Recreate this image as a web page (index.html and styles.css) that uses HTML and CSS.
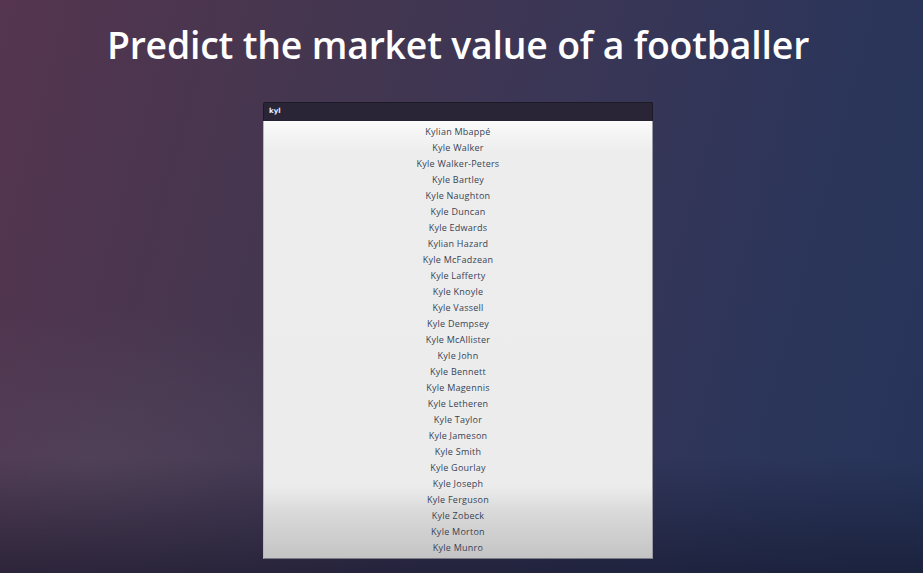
FILE: index.html
```html
<!DOCTYPE html>
<html>
<head>
<meta charset="utf-8">
<link rel="stylesheet" href="styles.css">
</head>
<body>
<div class="page">
  <h1 class="title">Predict the market value of a footballer</h1>
  <div class="search">
    <div class="input">kyl</div>
    <ul class="list">
      <li>Kylian Mbappé</li>
      <li>Kyle Walker</li>
      <li>Kyle Walker-Peters</li>
      <li>Kyle Bartley</li>
      <li>Kyle Naughton</li>
      <li>Kyle Duncan</li>
      <li>Kyle Edwards</li>
      <li>Kylian Hazard</li>
      <li>Kyle McFadzean</li>
      <li>Kyle Lafferty</li>
      <li>Kyle Knoyle</li>
      <li>Kyle Vassell</li>
      <li>Kyle Dempsey</li>
      <li>Kyle McAllister</li>
      <li>Kyle John</li>
      <li>Kyle Bennett</li>
      <li>Kyle Magennis</li>
      <li>Kyle Letheren</li>
      <li>Kyle Taylor</li>
      <li>Kyle Jameson</li>
      <li>Kyle Smith</li>
      <li>Kyle Gourlay</li>
      <li>Kyle Joseph</li>
      <li>Kyle Ferguson</li>
      <li>Kyle Zobeck</li>
      <li>Kyle Morton</li>
      <li>Kyle Munro</li>
    </ul>
  </div>
</div>
</body>
</html>
```
FILE: styles.css
```css
html, body {
  margin: 0;
  height: 100%;
}
body {
  background:
    linear-gradient(to bottom, rgba(0,0,0,0) 0%, rgba(0,0,0,0) 80%, rgba(18,20,40,0.55) 100%),
    radial-gradient(ellipse 320px 160px at 100px 470px, rgba(90,85,105,0.35), rgba(90,85,105,0)),
    linear-gradient(105deg, #55354f 0%, #45364f 30%, #3a3656 55%, #2c355a 80%, #263459 100%);
  overflow: hidden;
}
.page {
  display: flex;
  flex-direction: column;
  align-items: center;
  padding-right: 7px;
}
.title {
  margin: 22px 0 0;
  height: 80px;
  font-family: "Open Sans", sans-serif;
  font-weight: 600;
  font-size: 37.4px;
  line-height: 46px;
  color: #ffffff;
  letter-spacing: -0.2px;
}
.search {
  width: 390px;
  display: flex;
  flex-direction: column;
}
.input {
  height: 17px;
  background: #2a2536;
  border: 1px solid #1d1a27;
  border-bottom: 1px solid #262232;
  box-sizing: content-box;
  padding-left: 5px;
  font-family: "DejaVu Sans", sans-serif;
  font-weight: bold;
  font-size: 7px;
  line-height: 17px;
  color: #e8ecff;
  border-radius: 2px 2px 0 0;
}
.list {
  list-style: none;
  margin: 0;
  padding: 3px 0 2px;
  background: linear-gradient(to bottom, #fbfbfb 0px, #ededed 30px, #ececec 365px, #dadada 390px, #c4c4c4 100%);
  border-left: 1px solid #b8b8c0;
  border-right: 1px solid #9a9aa0;
  border-bottom: 1px solid #7a7a85;
  box-sizing: border-box;
}
.list li {
  height: 16px;
  line-height: 16px;
  text-align: center;
  font-family: "Open Sans", sans-serif;
  font-size: 9px;
  letter-spacing: 0.25px;
  color: #374354;
}
```
